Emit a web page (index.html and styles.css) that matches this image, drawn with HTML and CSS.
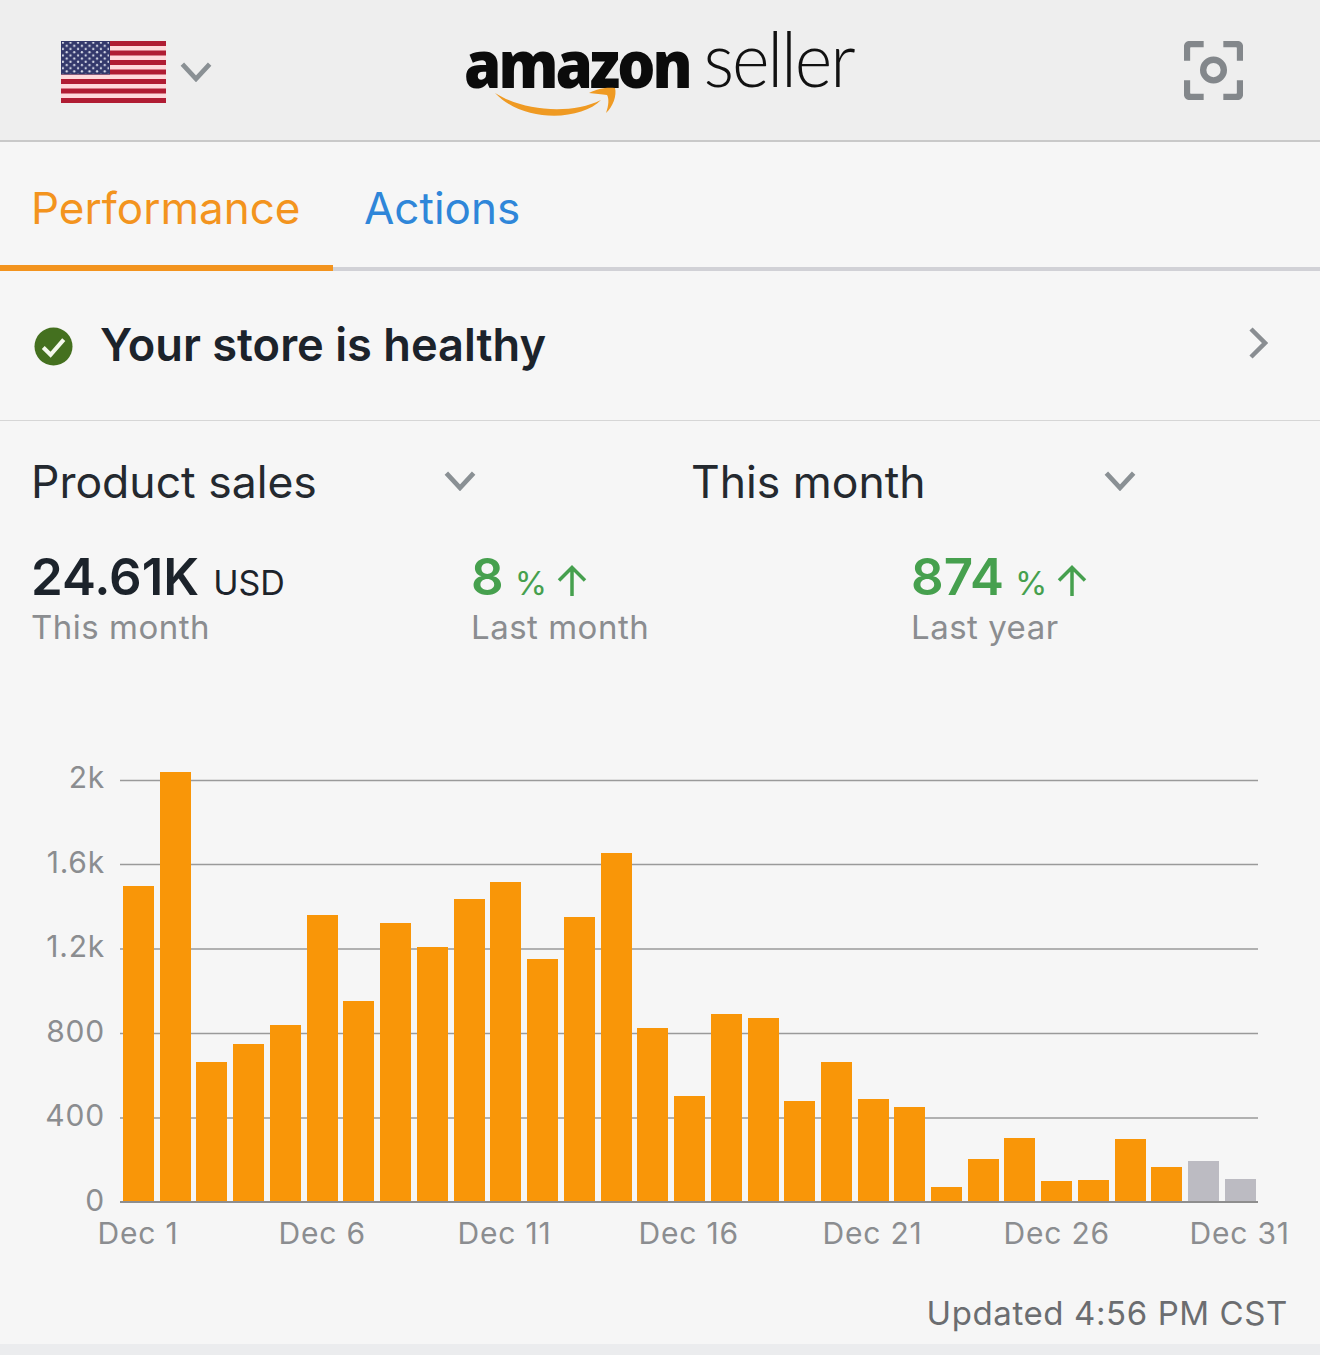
FILE: index.html
```html
<!DOCTYPE html>
<html lang="en">
<head>
<meta charset="utf-8">
<title>Amazon Seller</title>
<link rel="stylesheet" href="styles.css">
</head>
<body>
<div class="app">
  <header class="topbar">
    <div class="locale">
      <svg class="flag" viewBox="0 0 105 62" aria-hidden="true">
        <defs>
          <pattern id="stars" width="7.6" height="6.4" patternUnits="userSpaceOnUse">
            <circle cx="1.9" cy="1.6" r="1.15" fill="#d8dbe8"/>
            <circle cx="5.7" cy="4.8" r="1.15" fill="#d8dbe8"/>
          </pattern>
        </defs>
        <rect width="105" height="62" fill="#ffd9dc"/>
        <g fill="#b01c33">
          <rect y="0" width="105" height="5"/>
          <rect y="9.5" width="105" height="5"/>
          <rect y="19" width="105" height="5"/>
          <rect y="28.5" width="105" height="5"/>
          <rect y="38" width="105" height="5"/>
          <rect y="47.5" width="105" height="5"/>
          <rect y="57" width="105" height="5"/>
        </g>
        <rect width="49" height="33.5" fill="#33386b"/>
        <rect x="1" y="1" width="47" height="31.5" fill="url(#stars)"/>
      </svg>
      <svg class="chev chev-top" viewBox="0 0 30 20" aria-hidden="true"><path d="M2 3 L15 17 L28 3"/></svg>
    </div>
    <div class="logo">
      <span class="logo-amazon">amazon</span><span class="logo-seller">seller</span>
      <svg class="smile" viewBox="0 0 124 36" aria-hidden="true">
        <path class="smile-arc" d="M2 8 C30 26 78 30 108 15 C88 36 30 38 2 8 Z"/>
        <path class="smile-arc" d="M96 8 C105 3 115 2 122 3 C124 10 120 22 113 28 C116 20 116 13 114 10 C109 9 102 9 96 8 Z"/>
      </svg>
    </div>
    <svg class="scan" viewBox="0 0 60 60" aria-hidden="true">
      <path d="M3 20 V7 Q3 3 7 3 H20"/>
      <path d="M40 3 H53 Q57 3 57 7 V20"/>
      <path d="M57 40 V53 Q57 57 53 57 H40"/>
      <path d="M20 57 H7 Q3 57 3 53 V40"/>
      <circle cx="30" cy="29.500" r="10.500"/>
    </svg>
  </header>

  <nav class="tabs">
    <a class="tab tab-active">Performance</a>
    <a class="tab">Actions</a>
  </nav>

  <section class="health">
    <svg class="check" viewBox="0 0 40 40" aria-hidden="true">
      <circle cx="20" cy="20" r="19.500" fill="#44701f"/>
      <path d="M9.500 21 L17 28.500 L30.500 13" fill="none" stroke="#f4f8ec" stroke-width="4.200"/>
    </svg>
    <h2 class="health-title">Your store is healthy</h2>
    <svg class="chev-right" viewBox="0 0 20 34" aria-hidden="true"><path d="M3 3 L17 17 L3 31"/></svg>
  </section>

  <section class="selectors">
    <div class="select">
      <span>Product sales</span>
      <svg class="chev" viewBox="0 0 30 20" aria-hidden="true"><path d="M2 3 L15 17 L28 3"/></svg>
    </div>
    <div class="select">
      <span>This month</span>
      <svg class="chev" viewBox="0 0 30 20" aria-hidden="true"><path d="M2 3 L15 17 L28 3"/></svg>
    </div>
  </section>

  <section class="stats">
    <div class="stat">
      <div class="stat-value"><b>24.61K</b><span class="unit">USD</span></div>
      <div class="stat-label">This month</div>
    </div>
    <div class="stat stat-up">
      <div class="stat-value"><b>8</b><span class="unit pct">%</span><svg class="arrow" viewBox="0 0 30 32" aria-hidden="true"><path d="M15 31 V3 M2 15.500 L15 2.500 L28 15.500"/></svg></div>
      <div class="stat-label">Last month</div>
    </div>
    <div class="stat stat-up">
      <div class="stat-value"><b>874</b><span class="unit pct">%</span><svg class="arrow" viewBox="0 0 30 32" aria-hidden="true"><path d="M15 31 V3 M2 15.500 L15 2.500 L28 15.500"/></svg></div>
      <div class="stat-label">Last year</div>
    </div>
  </section>

  <svg class="chart" viewBox="0 0 1320 540" aria-label="Product sales by day">
    <g class="grid">
      <line x1="120" x2="1258" y1="80.500" y2="80.500"/>
      <line x1="120" x2="1258" y1="164.500" y2="164.500"/>
      <line x1="120" x2="1258" y1="249" y2="249"/>
      <line x1="120" x2="1258" y1="333.500" y2="333.500"/>
      <line x1="120" x2="1258" y1="418" y2="418"/>
    </g>
    <g class="ylabels">
      <text x="105" y="88">2k</text>
      <text x="105" y="173">1.6k</text>
      <text x="105" y="257">1.2k</text>
      <text x="105" y="342">800</text>
      <text x="105" y="426">400</text>
      <text x="105" y="511">0</text>
    </g>
    <g class="bars">
      <rect x="123" y="186" width="31" height="316"/>
      <rect x="160" y="72" width="31" height="430"/>
      <rect x="196" y="362" width="31" height="140"/>
      <rect x="233" y="344" width="31" height="158"/>
      <rect x="270" y="325" width="31" height="177"/>
      <rect x="307" y="215" width="31" height="287"/>
      <rect x="343" y="301" width="31" height="201"/>
      <rect x="380" y="223" width="31" height="279"/>
      <rect x="417" y="247" width="31" height="255"/>
      <rect x="454" y="199" width="31" height="303"/>
      <rect x="490" y="182" width="31" height="320"/>
      <rect x="527" y="259" width="31" height="243"/>
      <rect x="564" y="217" width="31" height="285"/>
      <rect x="601" y="153" width="31" height="349"/>
      <rect x="637" y="328" width="31" height="174"/>
      <rect x="674" y="396" width="31" height="106"/>
      <rect x="711" y="314" width="31" height="188"/>
      <rect x="748" y="318" width="31" height="184"/>
      <rect x="784" y="401" width="31" height="101"/>
      <rect x="821" y="362" width="31" height="140"/>
      <rect x="858" y="399" width="31" height="103"/>
      <rect x="894" y="407" width="31" height="95"/>
      <rect x="931" y="487" width="31" height="15"/>
      <rect x="968" y="459" width="31" height="43"/>
      <rect x="1004" y="438" width="31" height="64"/>
      <rect x="1041" y="481" width="31" height="21"/>
      <rect x="1078" y="480" width="31" height="22"/>
      <rect x="1115" y="439" width="31" height="63"/>
      <rect x="1151" y="467" width="31" height="35"/>
    </g>
    <g class="bars-pending">
      <rect x="1188" y="461" width="31" height="41"/>
      <rect x="1225" y="479" width="31" height="23"/>
    </g>
    <line class="axis" x1="120" x2="1258" y1="502" y2="502"/>
    <g class="xlabels">
      <text x="97.500" y="544">Dec 1</text>
      <text x="278.500" y="544">Dec 6</text>
      <text x="457.500" y="544">Dec 11</text>
      <text x="638.500" y="544">Dec 16</text>
      <text x="822.500" y="544">Dec 21</text>
      <text x="1003.500" y="544">Dec 26</text>
      <text x="1189.500" y="544">Dec 31</text>
    </g>
  </svg>

  <div class="updated">Updated 4:56 PM CST</div>
  <div class="footer-strip"></div>
</div>
</body>
</html>
```

FILE: styles.css
```css
* { box-sizing: border-box; }
html, body { margin: 0; padding: 0; }
body {
  background: #f6f6f6;
  font-family: Inter, "Liberation Sans", sans-serif;
  color: #1f262e;
}
.app { width: 1320px; height: 1355px; overflow: hidden; display: flex; flex-direction: column; }

/* top bar */
.topbar {
  position: relative;
  height: 142px;
  flex: none;
  display: flex;
  align-items: center;
  justify-content: space-between;
  padding: 4px 77px 0 61px;
  background: #eeeeee;
  border-bottom: 2px solid #c9c9c9;
}
.locale { display: flex; align-items: center; gap: 14px; }
.flag { width: 105px; height: 62px; display: block; }
.chev { width: 32px; height: 21px; display: block; fill: none; stroke: #8a9094; stroke-width: 4.500; }
.chev-top { margin-top: -2px; }
.logo { position: absolute; left: 464px; top: 18px; width: 400px; height: 100px; white-space: nowrap; line-height: 80px; }
.logo-amazon {
  display: inline-block;
  font-family: "Open Sans", sans-serif;
  font-weight: 800;
  font-size: 60px;
  letter-spacing: -3px;
  color: #0b0b0b;
  transform: scaleY(1.08);
}
.logo-seller {
  display: inline-block;
  margin-left: 14px;
  font-family: Lato, sans-serif;
  font-weight: 300;
  font-size: 72px;
  letter-spacing: -2.200px;
  color: #111;
  transform: scaleY(1.06);
  transform-origin: 50% 68%;
}
.smile { position: absolute; left: 29px; top: 67px; width: 124px; height: 36px; }
.smile-arc { fill: #ef9a23; }
.scan { width: 59px; height: 59px; display: block; margin-top: -3px; fill: none; stroke: #83878b; stroke-width: 6.500; }

/* tabs */
.tabs {
  height: 129px;
  flex: none;
  display: flex;
  border-bottom: 4px solid #d1d1d6;
  font-size: 44px;
}
.tab { display: block; height: 129px; padding: 40px 31px 0 31px; color: #2f86d9; line-height: 52px; }
.tab-active { color: #f3941e; border-bottom: 6px solid #f3941e; width: 333px; }

/* health row */
.health {
  height: 150px;
  flex: none;
  display: flex;
  align-items: center;
  padding: 0 52px 0 34px;
  border-bottom: 1px solid #d6d6d6;
}
.check { width: 39px; height: 39px; flex: none; margin-top: 2px; }
.health-title { flex: 1; margin: 0 0 2px 27px; font-size: 45.200px; font-weight: 600; color: #1c232b; }
.chev-right { width: 20px; height: 34px; fill: none; stroke: #8a8e92; stroke-width: 4.500; margin-bottom: 6px; }

/* selectors */
.selectors { display: grid; grid-template-columns: 660px 660px; height: 125px; flex: none; align-items: center; font-size: 44.500px; color: #24292f; }
.select { width: 476px; padding-left: 31px; display: flex; align-items: center; justify-content: space-between; }
.select span { margin-bottom: 3px; }
.select .chev { margin-bottom: 6px; }

/* stats */
.stats { display: grid; grid-template-columns: repeat(3, 440px); flex: none; height: 158px; }
.stat { padding-left: 31px; }
.stat-value { display: flex; align-items: baseline; height: 61px; line-height: 61px; margin-bottom: 1px; color: #1c232b; }
.stat-value b { font-size: 51px; font-weight: 600; }
.unit { margin-left: 14px; font-size: 34px; font-weight: 400; }
.pct { font-size: 33px; margin-left: 11px; }
.stat-up .stat-value { color: #46a04e; }
.arrow { width: 30px; height: 32px; margin-left: 10px; fill: none; stroke: #46a04e; stroke-width: 3.500; align-self: center; margin-top: 8px; }
.stat-label { font-size: 33px; line-height: 38px; color: #8b8d90; letter-spacing: 0.500px; }

/* chart */
.chart { display: block; flex: none; width: 1320px; height: 540px; overflow: visible; margin-top: -4px; font-family: Inter, "Liberation Sans", sans-serif; font-size: 30px; letter-spacing: 0.800px; }
.grid line { stroke: #9a9a9a; stroke-width: 1.500; }
.axis { stroke: #8e8e8e; stroke-width: 2; }
.bars rect { fill: #f99608; }
.bars-pending rect { fill: #bcbbc2; }
.ylabels text { text-anchor: end; fill: #8b8d90; }
.xlabels text { fill: #8b8d90; }

.updated { flex: none; text-align: right; padding: 53px 32px 0 0; height: 104px; font-size: 33px; line-height: 40px; letter-spacing: 0.600px; color: #6b6d70; }
.footer-strip { flex: 1; background: #ebecee; }
```
